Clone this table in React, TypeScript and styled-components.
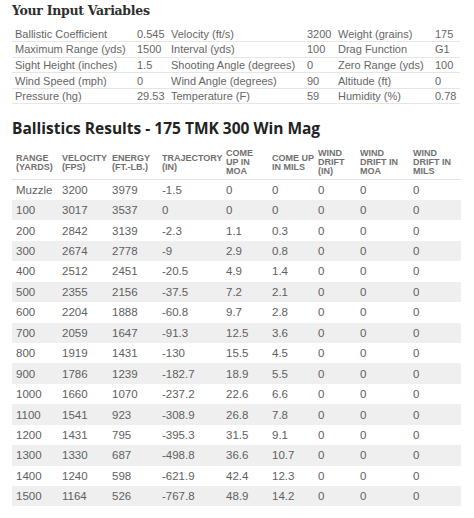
import React from "react";
import styled, { createGlobalStyle } from "styled-components";

const GlobalStyle = createGlobalStyle`
  html, body { margin: 0; padding: 0; background: #ffffff; }
  body { font-family: "Liberation Sans", Arial, sans-serif; }
  *, *::before, *::after { box-sizing: border-box; }
`;

const Page = styled.div`
  width: 474px;
  height: 518px;
  padding: 0 13px 0 12px;
  overflow: hidden;
  display: flex;
  flex-direction: column;
`;

const InputTitle = styled.h2`
  margin: 0;
  padding-top: 3px;
  height: 23px;
  font-family: "DejaVu Serif", serif;
  font-weight: bold;
  font-size: 12.5px;
  line-height: 16px;
  color: #2e2e2e;
  letter-spacing: -0.3px;
`;

const InputTable = styled.table`
  width: 448px;
  border-collapse: collapse;
  table-layout: fixed;
  margin-top: 3px;
`;

const InputRow = styled.tr`
  height: 15.6px;
  border-bottom: 1px solid #e6e6e6;
`;

const InputCell = styled.td<{ $w: number }>`
  width: ${(p) => p.$w}px;
  padding: 0 0 0 3px;
  font-family: "Liberation Sans", Arial, sans-serif;
  font-size: 11px;
  line-height: 14px;
  color: #666;
  white-space: nowrap;
  overflow: hidden;
  vertical-align: middle;
`;

const ResultsTitle = styled.h2`
  margin: 14px 0 0 0;
  font-family: "Open Sans", sans-serif;
  font-weight: 700;
  font-size: 15.5px;
  line-height: 20px;
  color: #222;
  letter-spacing: 0px;
`;

const ResultsTable = styled.table`
  width: 449px;
  border-collapse: collapse;
  table-layout: fixed;
  margin-top: 8px;
`;

const HeadRow = styled.tr`
  height: 33px;
  border-bottom: 1px solid #e2e2e2;
`;

const HeadCell = styled.th<{ $w: number }>`
  width: ${(p) => p.$w}px;
  padding: 0 0 0 4px;
  text-align: left;
  vertical-align: middle;
  font-family: "Liberation Sans", Arial, sans-serif;
  font-weight: bold;
  font-size: 9px;
  line-height: 9px;
  color: #707070;
  white-space: nowrap;
`;

const DataRow = styled.tr<{ $shaded: boolean }>`
  height: 20.45px;
  background: ${(p) => (p.$shaded ? "#efefef" : "#ffffff")};
`;

const DataCell = styled.td`
  padding: 0 0 0 4px;
  font-family: "Liberation Sans", Arial, sans-serif;
  font-size: 11.5px;
  line-height: 14px;
  color: #606060;
  vertical-align: middle;
  white-space: nowrap;
`;

const inputWidths = [122, 34, 136, 31, 97, 28];

const inputRows: string[][] = [
  ["Ballistic Coefficient", "0.545", "Velocity (ft/s)", "3200", "Weight (grains)", "175"],
  ["Maximum Range (yds)", "1500", "Interval (yds)", "100", "Drag Function", "G1"],
  ["Sight Height (inches)", "1.5", "Shooting Angle (degrees)", "0", "Zero Range (yds)", "100"],
  ["Wind Speed (mph)", "0", "Wind Angle (degrees)", "90", "Altitude (ft)", "0"],
  ["Pressure (hg)", "29.53", "Temperature (F)", "59", "Humidity (%)", "0.78"],
];

const headWidths = [46, 50, 50, 64, 46, 46, 42, 53, 52];

const headers: string[][] = [
  ["RANGE", "(YARDS)"],
  ["VELOCITY", "(FPS)"],
  ["ENERGY", "(FT.-LB.)"],
  ["TRAJECTORY", "(IN)"],
  ["COME", "UP IN", "MOA"],
  ["COME UP", "IN MILS"],
  ["WIND", "DRIFT", "(IN)"],
  ["WIND", "DRIFT IN", "MOA"],
  ["WIND", "DRIFT IN", "MILS"],
];

const results: (string | number)[][] = [
  ["Muzzle", 3200, 3979, "-1.5", 0, 0],
  [100, 3017, 3537, 0, 0, 0],
  [200, 2842, 3139, "-2.3", 1.1, 0.3],
  [300, 2674, 2778, -9, 2.9, 0.8],
  [400, 2512, 2451, "-20.5", 4.9, 1.4],
  [500, 2355, 2156, "-37.5", 7.2, 2.1],
  [600, 2204, 1888, "-60.8", 9.7, 2.8],
  [700, 2059, 1647, "-91.3", 12.5, 3.6],
  [800, 1919, 1431, -130, 15.5, 4.5],
  [900, 1786, 1239, "-182.7", 18.9, 5.5],
  [1000, 1660, 1070, "-237.2", 22.6, 6.6],
  [1100, 1541, 923, "-308.9", 26.8, 7.8],
  [1200, 1431, 795, "-395.3", 31.5, 9.1],
  [1300, 1330, 687, "-498.8", 36.6, 10.7],
  [1400, 1240, 598, "-621.9", 42.4, 12.3],
  [1500, 1164, 526, "-767.8", 48.9, 14.2],
];

export default function App() {
  return (
    <>
      <GlobalStyle />
      <Page>
        <InputTitle>Your Input Variables</InputTitle>
        <InputTable>
          <tbody>
            {inputRows.map((row, i) => (
              <InputRow key={i}>
                {row.map((c, j) => (
                  <InputCell key={j} $w={inputWidths[j]}>
                    {c}
                  </InputCell>
                ))}
              </InputRow>
            ))}
          </tbody>
        </InputTable>
        <ResultsTitle>Ballistics Results - 175 TMK 300 Win Mag</ResultsTitle>
        <ResultsTable>
          <thead>
            <HeadRow>
              {headers.map((lines, i) => (
                <HeadCell key={i} $w={headWidths[i]}>
                  {lines.map((l, k) => (
                    <React.Fragment key={k}>
                      {k > 0 && <br />}
                      {l}
                    </React.Fragment>
                  ))}
                </HeadCell>
              ))}
            </HeadRow>
          </thead>
          <tbody>
            {results.map((r, i) => (
              <DataRow key={i} $shaded={i % 2 === 1}>
                {r.map((c, j) => (
                  <DataCell key={j}>{String(c)}</DataCell>
                ))}
                <DataCell>0</DataCell>
                <DataCell>0</DataCell>
                <DataCell>0</DataCell>
              </DataRow>
            ))}
          </tbody>
        </ResultsTable>
      </Page>
    </>
  );
}
